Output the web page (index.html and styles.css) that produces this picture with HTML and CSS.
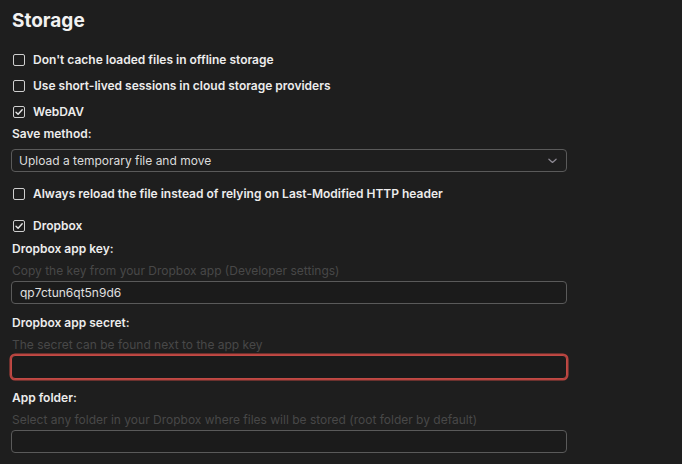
FILE: index.html
```html
<!DOCTYPE html>
<html lang="en">
<head>
<meta charset="utf-8">
<title>Storage</title>
<link rel="stylesheet" href="styles.css">
</head>
<body>
<main class="page">
  <h1 class="title">Storage</h1>

  <div class="checks">
    <label class="check"><span class="box"></span><span>Don't cache loaded files in offline storage</span></label>
    <label class="check"><span class="box"></span><span>Use short-lived sessions in cloud storage providers</span></label>
    <label class="check"><span class="box checked"><svg viewBox="0 0 12 12"><path d="M3 6.2 L5.1 8.3 L9.2 3.8"/></svg></span><span>WebDAV</span></label>
  </div>

  <div class="label save-label">Save method:</div>
  <div class="select">
    <span>Upload a temporary file and move</span>
    <svg class="chev" viewBox="0 0 10 6"><path d="M1 1 L5 4.6 L9 1"/></svg>
  </div>

  <label class="check reload"><span class="box"></span><span>Always reload the file instead of relying on Last-Modified HTTP header</span></label>

  <label class="check dropbox"><span class="box checked"><svg viewBox="0 0 12 12"><path d="M3 6.2 L5.1 8.3 L9.2 3.8"/></svg></span><span>Dropbox</span></label>

  <div class="field first">
    <div class="label">Dropbox app key:</div>
    <div class="hint">Copy the key from your Dropbox app (Developer settings)</div>
    <div class="input">qp7ctun6qt5n9d6</div>
  </div>

  <div class="field">
    <div class="label">Dropbox app secret:</div>
    <div class="hint">The secret can be found next to the app key</div>
    <div class="input invalid"></div>
  </div>

  <div class="field">
    <div class="label">App folder:</div>
    <div class="hint">Select any folder in your Dropbox where files will be stored (root folder by default)</div>
    <div class="input"></div>
  </div>
</main>
</body>
</html>
```

FILE: styles.css
```css
html, body {
  margin: 0;
  padding: 0;
  background: #1e1e1e;
}

body {
  font-family: Inter, "Noto Sans", "Liberation Sans", sans-serif;
  color: #e6e6e6;
  font-size: 12px;
}

.page {
  display: flex;
  flex-direction: column;
  padding: 0 0 0 11px;
  width: 556px;
}

.title {
  margin: 9px 0 0 1px;
  font-size: 19px;
  line-height: 24px;
  font-weight: 700;
  color: #f2f2f2;
}

.checks {
  display: flex;
  flex-direction: column;
  gap: 10px;
  margin-top: 19px;
}

.check {
  display: flex;
  align-items: center;
  gap: 8px;
  height: 16px;
  line-height: 16px;
  font-weight: 600;
  color: #ececec;
  padding-left: 2px;
}

.box {
  box-sizing: border-box;
  width: 12px;
  height: 12px;
  border: 1.5px solid #cfcfcf;
  border-radius: 2px;
  display: flex;
  align-items: center;
  justify-content: center;
  flex: none;
}

.box svg {
  width: 12px;
  height: 12px;
  flex: none;
}

.box svg path,
.chev path {
  fill: none;
  stroke-width: 1.4;
  stroke-linecap: round;
  stroke-linejoin: round;
}

.box svg path {
  stroke: #e6e6e6;
}

.label {
  font-weight: 600;
  line-height: 16px;
  height: 16px;
  color: #ececec;
  padding-left: 1px;
}

.save-label {
  margin-top: 6px;
}

.select {
  box-sizing: border-box;
  margin-top: 7px;
  height: 23px;
  border: 1px solid #5a5a5a;
  border-radius: 4px;
  display: flex;
  align-items: center;
  justify-content: space-between;
  padding: 0 9px 0 7px;
  font-size: 12px;
  color: #dcdcdc;
}

.chev {
  width: 9px;
  height: 6px;
}

.chev path {
  stroke: #8e8a94;
}

.reload {
  margin-top: 14px;
}

.dropbox {
  margin-top: 16px;
}

.field {
  display: flex;
  flex-direction: column;
  margin-top: 11px;
}

.field.first {
  margin-top: 7px;
}

.hint {
  margin-top: 6px;
  line-height: 16px;
  height: 16px;
  color: #484848;
  padding-left: 1px;
}

.input {
  box-sizing: border-box;
  margin-top: 2px;
  height: 23px;
  border: 1px solid #5a5a5a;
  border-radius: 4px;
  background: #1b1b1b;
  padding: 0 8px;
  line-height: 21px;
  color: #e0e0e0;
}

.input.invalid {
  border-color: #c24a45;
  box-shadow: 0 0 0 1.5px #b8443f;
  height: 24px;
}
```
